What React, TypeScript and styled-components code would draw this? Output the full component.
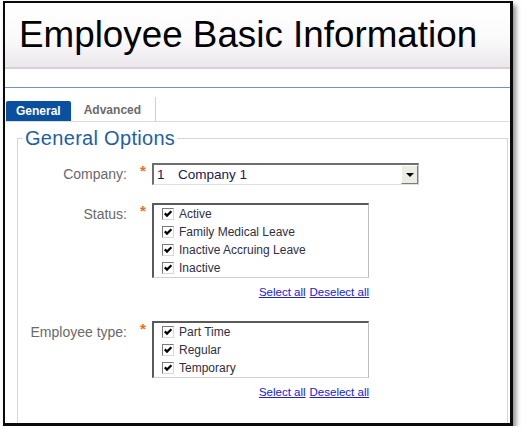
import styled, { createGlobalStyle } from "styled-components";

const GlobalStyle = createGlobalStyle`
  body {
    margin: 0;
    background: #ffffff;
    font-family: "Liberation Sans", Arial, sans-serif;
  }
`;

const Frame = styled.div`
  margin: 1px 0 0 3px;
  width: 510px;
  height: 425px;
  box-sizing: border-box;
  border: 2px solid #0a0a0a;
  border-right-width: 3px;
  border-bottom-width: 3px;
  box-shadow: 3px 4px 5px rgba(0, 0, 0, 0.45);
  overflow: hidden;
  background: #ffffff;
`;

const Header = styled.header`
  height: 66px;
  box-sizing: border-box;
  display: flex;
  align-items: center;
  padding-left: 14px;
  background: linear-gradient(#ffffff 0%, #fbfafb 55%, #ebe7eb 100%);
  border-bottom: 2px solid #d6d1d6;
`;

const Title = styled.h1`
  margin: 0;
  font-size: 36.8px;
  font-weight: normal;
  color: #000000;
`;

const TabBar = styled.nav`
  margin-top: 18px;
  height: 33px;
  display: flex;
  align-items: flex-end;
  padding-left: 1px;
  border-top: 1px solid #6f95c6;
  border-bottom: 1px solid #dcdcdc;
`;

const Tab = styled.div<{ $active?: boolean }>`
  font-size: 12px;
  font-weight: bold;
  line-height: 20px;
  ${(p) =>
    p.$active
      ? `
    height: 20px;
    padding: 0 10px;
    background: #0b4f9f;
    color: #ffffff;
    border-radius: 2px 2px 0 0;
  `
      : `
    height: 24px;
    box-sizing: border-box;
    padding: 3px 14px 0 13px;
    color: #6b6b6b;
    border-right: 1px solid #d0d0d0;
  `}
`;

const Fieldset = styled.fieldset`
  margin: 5px 2px 0 12px;
  padding: 13px 0 60px 0;
  border: 1px solid #d6d6d6;
  min-inline-size: 0;
`;

const Legend = styled.legend`
  margin-left: 5px;
  padding: 0 2px;
  font-size: 20px;
  letter-spacing: 0.3px;
  color: #1d5ea8;
`;

const Row = styled.div<{ $gap?: number }>`
  display: grid;
  grid-template-columns: 109px 25px auto;
  align-items: start;
  margin-top: ${(p) => p.$gap ?? 0}px;
`;

const Label = styled.label`
  font-size: 14px;
  line-height: 22px;
  color: #6a6a6a;
  text-align: right;
`;

const Required = styled.span`
  padding-left: 13px;
  font-size: 15px;
  font-weight: bold;
  line-height: 15px;
  color: #f36c12;
`;

const Select = styled.div`
  width: 267px;
  height: 22px;
  box-sizing: border-box;
  display: flex;
  align-items: center;
  border-top: 2px solid #6e6e6e;
  border-left: 2px solid #6e6e6e;
  border-right: 1px solid #c8c8c8;
  border-bottom: 1px solid #e0e0e0;
  font-size: 13.5px;
  color: #21204a;
`;

const SelectCode = styled.span`
  padding-left: 3px;
  width: 21px;
`;

const DropButton = styled.span`
  margin-left: auto;
  width: 17px;
  height: 100%;
  box-sizing: border-box;
  display: flex;
  align-items: center;
  justify-content: center;
  background: #ecebe4;
  border: 1px solid;
  border-color: #ffffff #7d7d7d #7d7d7d #ffffff;

  &::after {
    content: "";
    border-left: 4px solid transparent;
    border-right: 4px solid transparent;
    border-top: 4px solid #000000;
  }
`;

const Group = styled.div`
  width: 217px;
`;

const ListBox = styled.div`
  box-sizing: border-box;
  padding-left: 8px;
  border-top: 2px solid #5a5a5a;
  border-left: 2px solid #5a5a5a;
  border-right: 1px solid #bdbdbd;
  border-bottom: 1px solid #d0d0d0;
`;

const Item = styled.div`
  height: 18px;
  display: flex;
  align-items: center;
  gap: 5px;
  font-size: 12px;
  color: #303040;
`;

const Box = styled.span`
  width: 12px;
  height: 12px;
  box-sizing: border-box;
  display: flex;
  border: 1px solid;
  border-color: #7a7a7a #d8d8d8 #d8d8d8 #7a7a7a;
  background: #ffffff;
`;

const Links = styled.div`
  margin-top: 7px;
  display: flex;
  justify-content: flex-end;
  gap: 4px;
  font-size: 11.5px;
  line-height: 14px;

  a {
    color: #2020d8;
    text-decoration: underline;
  }
`;

function Check() {
  return (
    <Box>
      <svg width="10" height="10" viewBox="0 0 10 10">
        <path d="M1.8 4.4 L4 6.6 L8.4 2.2" fill="none" stroke="#000" strokeWidth="2.2" />
      </svg>
    </Box>
  );
}

function CheckList({ items }: { items: string[] }) {
  return (
    <Group>
      <ListBox>
        {items.map((item) => (
          <Item key={item}>
            <Check />
            {item}
          </Item>
        ))}
      </ListBox>
      <Links>
        <a>Select all</a>
        <a>Deselect all</a>
      </Links>
    </Group>
  );
}

const statuses = ["Active", "Family Medical Leave", "Inactive Accruing Leave", "Inactive"];
const types = ["Part Time", "Regular", "Temporary"];

export default function App() {
  return (
    <>
      <GlobalStyle />
      <Frame>
        <Header>
          <Title>Employee Basic Information</Title>
        </Header>
        <TabBar>
          <Tab $active>General</Tab>
          <Tab>Advanced</Tab>
        </TabBar>
        <Fieldset>
          <Legend>General Options</Legend>
          <Row>
            <Label>Company:</Label>
            <Required>*</Required>
            <Select>
              <SelectCode>1</SelectCode>
              Company 1
              <DropButton />
            </Select>
          </Row>
          <Row $gap={18}>
            <Label>Status:</Label>
            <Required>*</Required>
            <CheckList items={statuses} />
          </Row>
          <Row $gap={22}>
            <Label>Employee type:</Label>
            <Required>*</Required>
            <CheckList items={types} />
          </Row>
        </Fieldset>
      </Frame>
    </>
  );
}
